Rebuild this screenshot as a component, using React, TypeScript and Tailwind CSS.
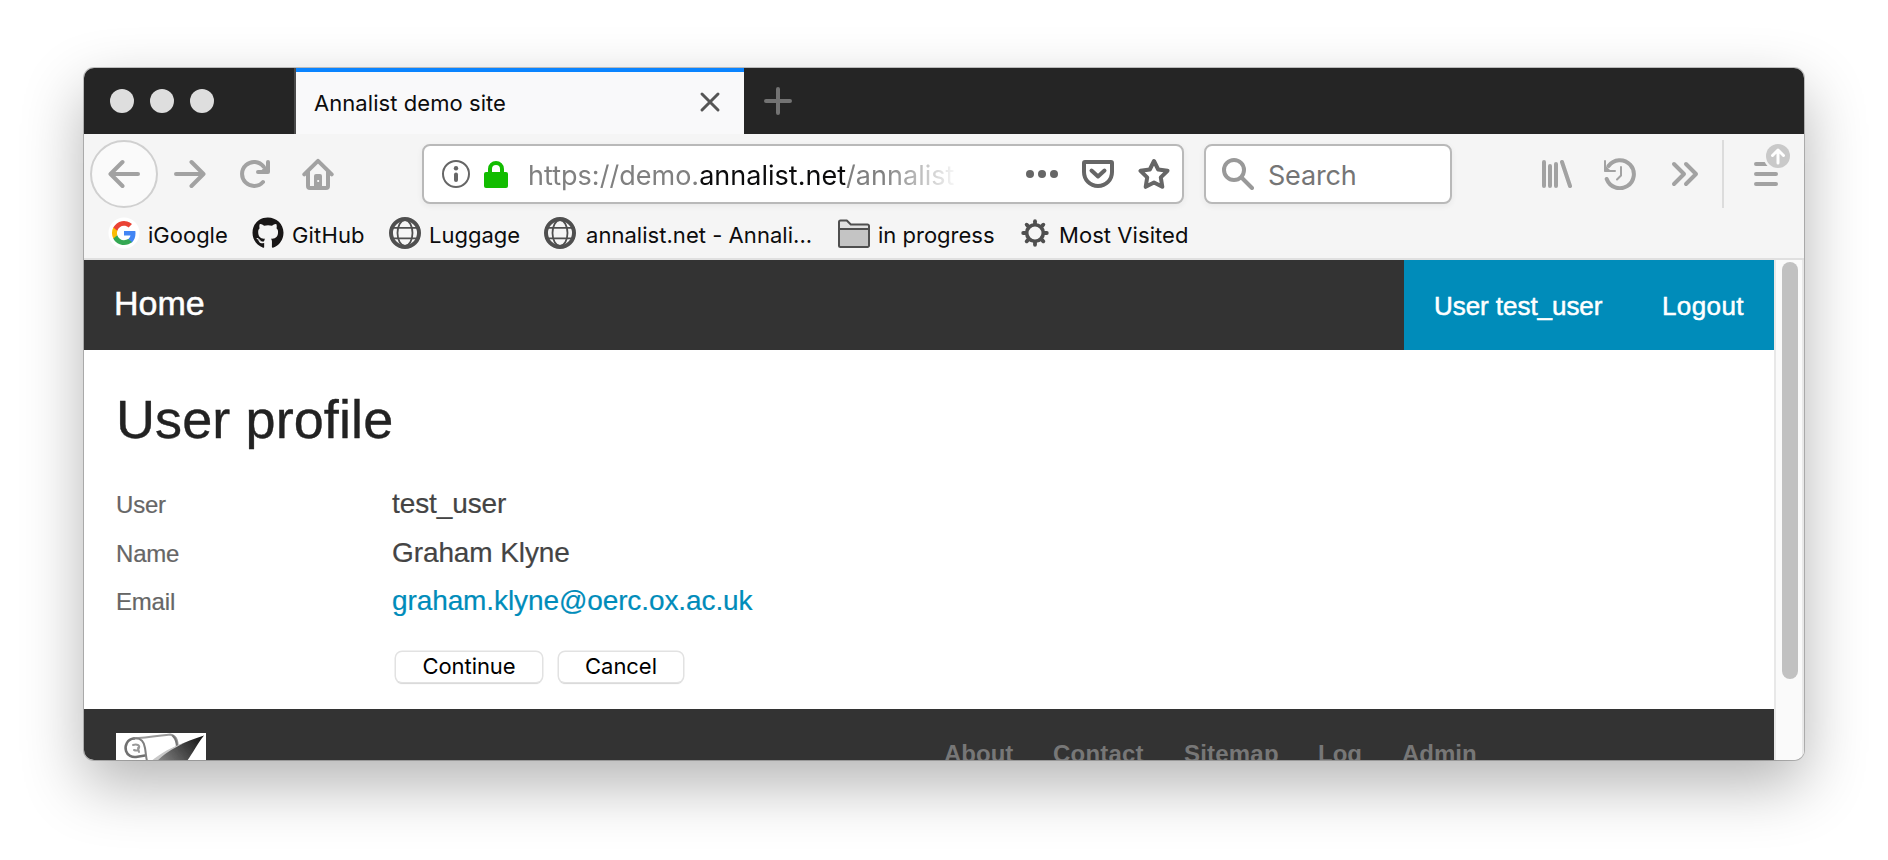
import React from 'react';
import { FaGithub } from 'react-icons/fa';

const INTER = "font-['Inter',sans-serif]";
const HELV = "font-['Liberation_Sans',sans-serif]";

type IconProps = { className?: string; children: React.ReactNode };

function Icon({ className = '', children }: IconProps) {
  return (
    <svg
      viewBox="0 0 32 32"
      className={`size-8 shrink-0 ${className}`}
      fill="none"
      stroke="currentColor"
      strokeWidth={4}
      strokeLinecap="round"
      strokeLinejoin="round"
    >
      {children}
    </svg>
  );
}

function Globe() {
  return (
    <Icon className="text-[#4f4f4f]">
      <circle cx="16" cy="16" r="14" />
      <g strokeWidth={1.8}>
        <ellipse cx="16" cy="16" rx="7.5" ry="13" />
        <path d="M3 10.8h26M3 21.4h26" />
      </g>
    </Icon>
  );
}

function GoogleIcon() {
  return (
    <svg viewBox="0 0 32 32" className="size-8 shrink-0">
      <circle cx="16" cy="16" r="15.5" fill="#fff" />
      <g transform="translate(4 4)">
        <path fill="#4285f4" d="M23.5 12.3c0-.9-.1-1.5-.2-2.3H12v4.5h6.5c-.3 1.5-1.2 2.9-2.5 3.8v3.1h4c2.3-2.2 3.5-5.3 3.5-9.1z" />
        <path fill="#34a853" d="M12 24c3.2 0 6-1.1 8-2.9l-4-3c-1.1.7-2.4 1.2-4 1.2-3.1 0-5.8-2.1-6.7-5h-4v3.1C3.3 21.3 7.3 24 12 24z" />
        <path fill="#fbbc05" d="M5.3 14.3c-.5-1.500-.5-3.100 0-4.600V6.600h-4a12 12 0 0 0 0 10.800z" />
        <path fill="#ea4335" d="M12 4.700c1.800 0 3.300.6 4.600 1.800L20 3.100A12 12 0 0 0 1.300 6.600l4 3.100c.9-2.900 3.600-5 6.700-5z" />
      </g>
    </svg>
  );
}

function FolderIcon() {
  return (
    <Icon className="text-[#4f4f4f]">
      <path strokeWidth={2} fill="#e0e0e0" d="M1 5a1.500 1.500 0 0 1 1.500-1.500h6.300L12.800 7.500H29.500A1.500 1.500 0 0 1 31 9v3H1z" />
      <path strokeWidth={2} fill="#c4c4c4" d="M1 12h30v16.500a1.500 1.500 0 0 1-1.500 1.500h-27A1.500 1.500 0 0 1 1 28.500z" />
    </Icon>
  );
}

function GearIcon() {
  return (
    <Icon className="text-[#4f4f4f]">
      <circle cx="16" cy="16" r="8.300" strokeWidth={3.600} />
      <g strokeWidth={3.800}>
        {[0, 45, 90, 135, 180, 225, 270, 315].map((a) => (
          <path key={a} d="M16 6.500V4.200" transform={`rotate(${a} 16 16)`} />
        ))}
      </g>
    </Icon>
  );
}

function TabBar() {
  return (
    <div className="flex h-[66px] bg-[#252525]">
      <div className="flex w-[210px] items-center gap-4 pl-[26px]">
        <span className="size-6 rounded-full bg-[#dedede]" />
        <span className="size-6 rounded-full bg-[#dedede]" />
        <span className="size-6 rounded-full bg-[#dedede]" />
      </div>
      <div className="w-[2px] bg-[#4a4a4a]" />
      <div className="flex w-[448px] items-center justify-between border-t-4 border-[#0a84ff] bg-[#f9f9fa] pr-[18px] pl-[18px]">
        <span className="text-[22px] tracking-[0.06px] whitespace-nowrap text-[#0c0c0d]">Annalist demo site</span>
        <Icon className="text-[#555]">
          <path strokeWidth={3} d="M8 7l16 16M24 7L8 23" />
        </Icon>
      </div>
      <div className="flex items-center pl-[18px]">
        <Icon className="text-[#737373]">
          <path d="M16 4v24M4 16h24" />
        </Icon>
      </div>
    </div>
  );
}

function NavBar() {
  return (
    <div className="flex h-[68px] items-center text-[#a2a2a2]">
      <div className="ml-[6px] flex size-[68px] items-center justify-center rounded-full border-2 border-[#d0d0d0] bg-[#fafafa]">
        <Icon>
          <path d="M30 16H3M14.500 4L2.500 16l12 12" />
        </Icon>
      </div>
      <Icon className="ml-4">
        <path d="M2 16h27M17.500 4l12 12-12 12" />
      </Icon>
      <Icon className="ml-8">
        <path d="M25 24A12 12 0 1 1 25.500 8.600" />
        <path d="M30 4v10H20" />
        <path d="M29 8.500V13h-5z" strokeWidth={2} fill="currentColor" />
      </Icon>
      <Icon className="ml-8">
        <path d="M2.300 16.300L16 2.800l13.700 13.500" />
        <path d="M6 14v14a2 2 0 0 0 2 2h16a2 2 0 0 0 2-2V14" />
        <path d="M14 16h4a2 2 0 0 1 2 2v11h-8V18a2 2 0 0 1 2-2z" fill="currentColor" stroke="none" />
        <rect x="15.300" y="22" width="1.800" height="2" fill="#f5f5f5" stroke="none" />
      </Icon>

      <div className="ml-[88px] flex h-[60px] w-[762px] items-center rounded-[8px] border-2 border-[#b9b9b9] bg-white text-[#666] shadow-[0_2px_6px_rgba(0,0,0,0.06)]">
        <Icon className="ml-[16px]">
          <circle cx="16" cy="16" r="13" strokeWidth={2} />
          <path d="M16 16.500v5.500" />
          <circle cx="16" cy="10.200" r="2.200" fill="currentColor" stroke="none" />
        </Icon>
        <Icon className="ml-[8px] text-[#12bc00]">
          <path strokeLinecap="butt" d="M10 15v-4a6 6 0 0 1 12 0v4" />
          <rect x="4" y="14" width="24" height="16" rx="2" fill="currentColor" stroke="none" />
        </Icon>
        <div className="ml-[16px] w-[430px] overflow-hidden [mask-image:linear-gradient(to_right,#000_355px,transparent_432px)] pt-[3px] text-[27px] leading-[36px] tracking-[0.02px] whitespace-nowrap text-[#808080]">
          https://demo.<span className="text-[#0c0c0d]">annalist.net</span>/annalist
        </div>
        <svg viewBox="0 0 32 32" className="ml-[68px] size-8 shrink-0" fill="currentColor">
          <circle cx="4" cy="16" r="4" />
          <circle cx="16" cy="16" r="4" />
          <circle cx="28" cy="16" r="4" />
        </svg>
        <Icon className="ml-[24px]">
          <path d="M2 5a1 1 0 0 1 1-1h26a1 1 0 0 1 1 1v9c0 7.800-6 14-14 14S2 21.800 2 14z" />
          <path d="M9.500 12.500l6.500 6 6.500-6" />
        </Icon>
        <Icon className="ml-[24px]">
          <path d="M16 3l4.200 8.500 9.300 1.300-6.700 6.600 1.500 9.400L16 24.500l-8.300 4.300 1.500-9.400-6.700-6.600 9.300-1.300z" />
        </Icon>
      </div>

      <div className="ml-[20px] flex h-[60px] w-[248px] items-center rounded-[8px] border-2 border-[#b9b9b9] bg-white shadow-[0_2px_6px_rgba(0,0,0,0.06)]">
        <Icon className="ml-[16px] text-[#999]">
          <circle cx="12" cy="12" r="10" />
          <path d="M20 20l10 10" />
        </Icon>
        <span className="ml-[14px] pt-[3px] text-[27px] leading-[36px] tracking-[-0.2px] text-[#757575]">Search</span>
      </div>

      <Icon className="ml-[88px]">
        <path d="M4 4v24M10 8v20M16 6v22M22 4l8 24" />
      </Icon>
      <Icon className="ml-[32px]">
        <path d="M2.700 21A14 14 0 1 0 4.500 8" />
        <path strokeWidth={2} d="M1 3v10h10" />
        <path strokeWidth={2} fill="currentColor" d="M1.500 9v4h4z" />
        <path strokeWidth={2} d="M17 9v8.500l-4 4" />
      </Icon>
      <Icon className="ml-[34px]">
        <path d="M4 6l10 10L4 26M16 6l10 10-10 10" />
      </Icon>
      <div className="ml-[20px] h-[68px] w-[2px] bg-[#dcdcdc]" />
      <svg
        viewBox="0 -10 40 68"
        className="ml-[28px] h-[68px] w-[40px] shrink-0"
        fill="none"
        stroke="currentColor"
        strokeWidth={4}
        strokeLinecap="round"
        strokeLinejoin="round"
      >
        <path d="M4 14h20M4 24h20M4 34h20" />
        <circle cx="26" cy="6" r="14.500" fill="#f5f5f5" stroke="none" />
        <circle cx="26" cy="6" r="12" fill="#c9c9c9" stroke="none" />
        <path stroke="#fff" strokeWidth={3} d="M26 13V0M20.500 5.500L26 0l5.500 5.500" />
      </svg>
    </div>
  );
}

function Bookmark({ className, icon, label }: { className: string; icon: React.ReactNode; label: string }) {
  return (
    <div className={`flex shrink-0 items-center whitespace-nowrap ${className}`}>
      {icon}
      <span className="pt-[4px]">{label}</span>
    </div>
  );
}

function BookmarksBar() {
  return (
    <div className="flex h-[50px] items-center pl-6 text-[22px] leading-[30px] text-[#0c0c0d]">
      <Bookmark className="w-[144px] gap-[8px]" icon={<GoogleIcon />} label="iGoogle" />
      <Bookmark className="w-[137px] gap-[8px] tracking-[0.15px]" icon={<FaGithub className="size-8 text-[#191717]" />} label="GitHub" />
      <Bookmark className="w-[155px] gap-[8px]" icon={<Globe />} label="Luggage" />
      <Bookmark className="w-[294px] gap-[10px] tracking-[0.04px]" icon={<Globe />} label="annalist.net - Annali..." />
      <Bookmark className="w-[181px] gap-[8px]" icon={<FolderIcon />} label="in progress" />
      <Bookmark className="gap-[8px] tracking-[0.06px]" icon={<GearIcon />} label="Most Visited" />
    </div>
  );
}

function Row({ label, children }: { label: string; children: React.ReactNode }) {
  return (
    <div className="flex h-[48.500px] items-baseline leading-[36px] whitespace-nowrap">
      <span className="w-[276px] text-[24px] tracking-[-0.200px] text-[#666] [-webkit-text-stroke:0.2px]">{label}</span>
      <span className="text-[28px] tracking-[-0.1px] text-[#444] [-webkit-text-stroke:0.2px]">{children}</span>
    </div>
  );
}

function PushButton({ className, children }: { className: string; children: React.ReactNode }) {
  return (
    <button
      className={`h-[30px] rounded-[6px] bg-white text-[22px] leading-[29px] tracking-[-0.05px] text-black shadow-[0_0_0_1.500px_#e2e2e2,0_2px_1px_#cfcfcf] ${INTER} ${className}`}
    >
      {children}
    </button>
  );
}

function Logo() {
  return (
    <svg viewBox="0 0 90 90" className="h-[90px] w-[90px] bg-white" fill="none">
      <defs>
        <linearGradient id="nib" x1="45" y1="35" x2="88" y2="2" gradientUnits="userSpaceOnUse">
          <stop offset="0" stopColor="#8a8a8a" />
          <stop offset="0.5" stopColor="#4a4a4a" />
          <stop offset="1" stopColor="#101010" />
        </linearGradient>
        <filter id="soft" x="-10%" y="-10%" width="120%" height="120%">
          <feGaussianBlur stdDeviation="0.7" />
        </filter>
      </defs>
      <g filter="url(#soft)">
        <g stroke="#8a8a8a" strokeWidth={2} strokeLinecap="round">
          <path d="M17 5.500C30 5 42 3 54 1.500c6 1 8 6 7.500 13" stroke="#9a9a9a" />
          <path d="M18 5.500C11 6 8.500 13 10 18c1.500 4.500 6 6.500 10 6l9-1.500" stroke="#707070" strokeWidth={2.500} />
          <path d="M18 5.500c7-1 10 3 11 9.500 1 6 1 9 2 13" stroke="#808080" />
          <path d="M17 12c4-1 7 0 6 3-1 3-3 3-5 2M22 15l1 4" stroke="#999" />
          <path d="M57 3c3 3 4 7 4 12" stroke="#777" />
        </g>
        <path d="M38 27C52 16 68 9 88 2.500 81 11 77 20 71 28L60 40H28z" fill="url(#nib)" />
        <path d="M34 29C46 19 56 14 68 10 56 16 48 21 40 29z" fill="#c8c8c8" />
      </g>
    </svg>
  );
}

function Page() {
  return (
    <div className={`flex w-[1690px] flex-col bg-white ${HELV}`}>
      <div className="flex h-[90px] shrink-0 items-center justify-between bg-[#333] text-white">
        <span className="pb-[4px] pl-[30px] text-[34px] leading-[40px] [-webkit-text-stroke:0.5px]">Home</span>
        <div className="flex h-full items-center bg-[#008cba] pt-[2px] pr-[30px] pl-[30px] text-[26px] whitespace-nowrap [-webkit-text-stroke:0.5px]">
          <span className="w-[228px] tracking-[-0.05px]">User test_user</span>
          <span className="w-[82px] tracking-[0.4px]">Logout</span>
        </div>
      </div>
      <div className="h-[359px] shrink-0 pl-[32px]">
        <h1 className="pt-[34px] text-[54px] leading-[70px] tracking-[0.1px] text-[#222] [-webkit-text-stroke:0.4px]">User profile</h1>
        <div className="pt-[32px]">
          <Row label="User">test_user</Row>
          <Row label="Name">Graham Klyne</Row>
          <Row label="Email">
            <span className="text-[#008cba]">graham.klyne@oerc.ox.ac.uk</span>
          </Row>
        </div>
        <div className="flex gap-[17px] pt-[20px] pl-[280px]">
          <PushButton className="w-[146px]">Continue</PushButton>
          <PushButton className="w-[124px]">Cancel</PushButton>
        </div>
      </div>
      <div className="flex h-[140px] shrink-0 bg-[#333] pt-[24px] pl-[32px]">
        <Logo />
        <nav className="ml-[738px] flex pt-px text-[24px] leading-[40px] font-bold text-[#777]">
          <span className="w-[109px]">About</span>
          <span className="w-[131px] tracking-[0.2px]">Contact</span>
          <span className="w-[134px] tracking-[0.200px]">Sitemap</span>
          <span className="w-[84px]">Log</span>
          <span>Admin</span>
        </nav>
      </div>
    </div>
  );
}

export default function App() {
  return (
    <div className="h-[860px] w-[1888px] overflow-hidden bg-white pt-[68px] pl-[84px]">
      <div className={`h-[692px] w-[1720px] rounded-[10px] shadow-[0_0_0_1px_rgba(0,0,0,0.22),0_24px_62px_rgba(0,0,0,0.3)] ${INTER}`}>
        <div className="flex h-full flex-col overflow-hidden rounded-[10px]">
          <TabBar />
          <div className="h-[126px] shrink-0 border-b-2 border-[#e0e0e0] bg-[#f5f5f5] pt-[6px]">
            <NavBar />
            <BookmarksBar />
          </div>
          <div className="flex min-h-0 flex-1 overflow-hidden">
            <Page />
            <div className="w-[30px] border-x-2 border-[#e8e8e8] bg-[#fafafa] pt-[2px] pl-[6px]">
              <div className="h-[417px] w-4 rounded-full bg-[#c1c1c1]" />
            </div>
          </div>
        </div>
      </div>
    </div>
  );
}
